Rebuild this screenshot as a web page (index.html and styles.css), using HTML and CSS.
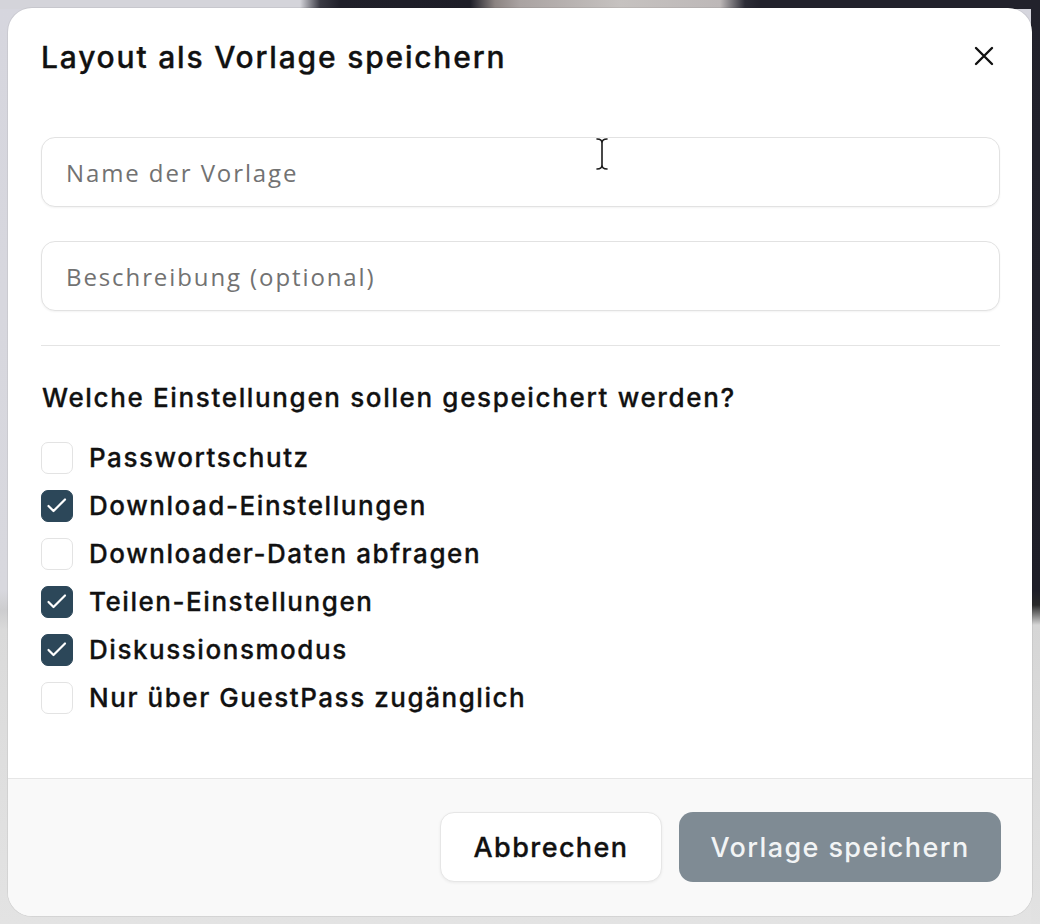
FILE: index.html
```html
<!DOCTYPE html>
<html lang="de">
<head>
<meta charset="utf-8">
<title>Layout als Vorlage speichern</title>
<link rel="stylesheet" href="styles.css">
</head>
<body>
<div class="modal">
  <div class="modal-header">
    <h2 class="modal-title">Layout als Vorlage speichern</h2>
    <button class="close-btn" aria-label="Schließen">
      <svg width="20" height="20" viewBox="0 0 20 20"><path d="M2 2 L18 18 M18 2 L2 18" stroke="#111" stroke-width="2.4" stroke-linecap="round" fill="none"/></svg>
    </button>
  </div>
  <div class="modal-body">
    <input class="text-input" type="text" placeholder="Name der Vorlage">
    <input class="text-input second" type="text" placeholder="Beschreibung (optional)">
    <div class="divider"></div>
    <p class="question">Welche Einstellungen sollen gespeichert werden?</p>
    <ul class="options">
      <li class="option"><span class="box"></span><span class="label">Passwortschutz</span></li>
      <li class="option"><span class="box checked"><svg width="32" height="32" viewBox="0 0 32 32"><path d="M7.5 16 L12.5 21 L24 9.5" stroke="#fff" stroke-width="2.2" stroke-linecap="round" stroke-linejoin="round" fill="none"/></svg></span><span class="label">Download-Einstellungen</span></li>
      <li class="option"><span class="box"></span><span class="label">Downloader-Daten abfragen</span></li>
      <li class="option"><span class="box checked"><svg width="32" height="32" viewBox="0 0 32 32"><path d="M7.5 16 L12.5 21 L24 9.5" stroke="#fff" stroke-width="2.2" stroke-linecap="round" stroke-linejoin="round" fill="none"/></svg></span><span class="label">Teilen-Einstellungen</span></li>
      <li class="option"><span class="box checked"><svg width="32" height="32" viewBox="0 0 32 32"><path d="M7.5 16 L12.5 21 L24 9.5" stroke="#fff" stroke-width="2.2" stroke-linecap="round" stroke-linejoin="round" fill="none"/></svg></span><span class="label">Diskussionsmodus</span></li>
      <li class="option"><span class="box"></span><span class="label">Nur über GuestPass zugänglich</span></li>
    </ul>
  </div>
  <div class="modal-footer">
    <button class="btn btn-cancel">Abbrechen</button>
    <button class="btn btn-save">Vorlage speichern</button>
  </div>
  <svg class="cursor" width="14" height="34" viewBox="0 0 14 34"><path d="M2 2 C5 2 7 3 7 6 C7 3 9 2 12 2 M7 6 V28 M2 32 C5 32 7 31 7 28 C7 31 9 32 12 32" stroke="#fff" stroke-width="3.2" fill="none" stroke-linecap="round"/><path d="M2 2 C5 2 7 3 7 6 C7 3 9 2 12 2 M7 6 V28 M2 32 C5 32 7 31 7 28 C7 31 9 32 12 32" stroke="#1a1a1a" stroke-width="1.6" fill="none" stroke-linecap="round"/></svg>
</div>
</body>
</html>
```

FILE: styles.css
```css
* { box-sizing: border-box; }

html, body { margin: 0; padding: 0; }

body {
  width: 1040px;
  height: 924px;
  padding: 8px;
  overflow: hidden;
  font-family: "Inter", "Noto Sans", sans-serif;
  color: #111;
  background:
    linear-gradient(to right, #d4d4da 0, #d4d4da 300px, #3a3a44 320px, #20202a 340px, #1e1e28 470px, #8c8482 495px, #aaa3a2 520px, #c6c2c0 620px, #bdb8b8 720px, #2c2c36 745px, #22222c 760px, #22222c 100%) top left / 100% 9px no-repeat,
    linear-gradient(to bottom, #22222c 0, #1e1e28 590px, #2a2a2a 605px, #d6d6d6 625px, #e2e2e2 100%) top right / 9px 100% no-repeat,
    linear-gradient(to bottom, #d6d6de 0, #d8d8de 590px, #cdcdcf 610px, #dadada 630px, #e3e3e3 100%);
}

.modal {
  position: relative;
  width: 1024px;
  height: 908px;
  background: #fff;
  border-radius: 24px;
  box-shadow: 0 0 0 1px rgba(0,0,0,0.06);
  display: flex;
  flex-direction: column;
  overflow: hidden;
}

.modal-header {
  height: 98px;
  padding: 0 34px 0 33px;
  display: flex;
  align-items: center;
  justify-content: space-between;
}

.modal-title {
  margin: 0;
  font-size: 30px;
  font-weight: 500;
  letter-spacing: 1.8px;
  line-height: 36px;
  -webkit-text-stroke: 0.35px #111;
}

.close-btn {
  width: 36px;
  height: 36px;
  margin-right: -4px;
  margin-top: -2px;
  border: 0;
  background: none;
  padding: 0;
  display: flex;
  align-items: center;
  justify-content: center;
}

.modal-body {
  flex: 1;
  padding: 31px 32px 0 33px;
  display: flex;
  flex-direction: column;
}

.text-input {
  width: 100%;
  height: 70px;
  border: 1px solid #e2e2e2;
  border-radius: 14px;
  padding: 0 24px;
  font-family: "Open Sans", "Noto Sans", sans-serif;
  font-size: 24px;
  letter-spacing: 1.9px;
  color: #333;
  background: #fff;
  box-shadow: 0 1px 2px rgba(0,0,0,0.05);
  outline: none;
}

.text-input::placeholder { color: #727272; }

.text-input.second { margin-top: 34px; }

.divider {
  margin-top: 34px;
  height: 1px;
  background: #e4e4e4;
}

.question {
  margin: 36px 0 0 1px;
  font-size: 26px;
  font-weight: 500;
  letter-spacing: 1.65px;
  line-height: 32px;
  -webkit-text-stroke: 0.3px #111;
}

.options {
  list-style: none;
  margin: 20px 0 0 0;
  padding: 0;
}

.option {
  height: 48px;
  display: flex;
  align-items: center;
  gap: 16px;
}

.box {
  width: 32px;
  height: 32px;
  border: 1px solid #e3e3e3;
  border-radius: 7px;
  background: #fff;
  display: flex;
  align-items: center;
  justify-content: center;
  flex-shrink: 0;
}

.box.checked {
  background: #2c4759;
  border-color: #2c4759;
}

.box.checked svg { margin: -1px; }

.label {
  font-size: 26px;
  font-weight: 500;
  letter-spacing: 1.55px;
  line-height: 32px;
  -webkit-text-stroke: 0.3px #111;
}

.modal-footer {
  height: 138px;
  border-top: 1px solid #e6e6e6;
  background: #f9f9f9;
  display: flex;
  align-items: center;
  justify-content: flex-end;
  gap: 17px;
  padding: 0 31px 1px 0;
}

.btn {
  height: 70px;
  border-radius: 14px;
  font-family: "Inter", "Noto Sans", sans-serif;
  font-size: 27px;
  font-weight: 500;
  letter-spacing: 1.4px;
}

.btn-cancel {
  width: 222px;
  border: 1px solid #e6e6e6;
  background: #fff;
  color: #111;
  box-shadow: 0 1px 3px rgba(0,0,0,0.06);
  -webkit-text-stroke: 0.3px #111;
}

.btn-save {
  width: 322px;
  border: 0;
  background: #7f8b94;
  color: #f2f4f5;
}

.cursor {
  position: absolute;
  left: 587px;
  top: 129px;
}
```
